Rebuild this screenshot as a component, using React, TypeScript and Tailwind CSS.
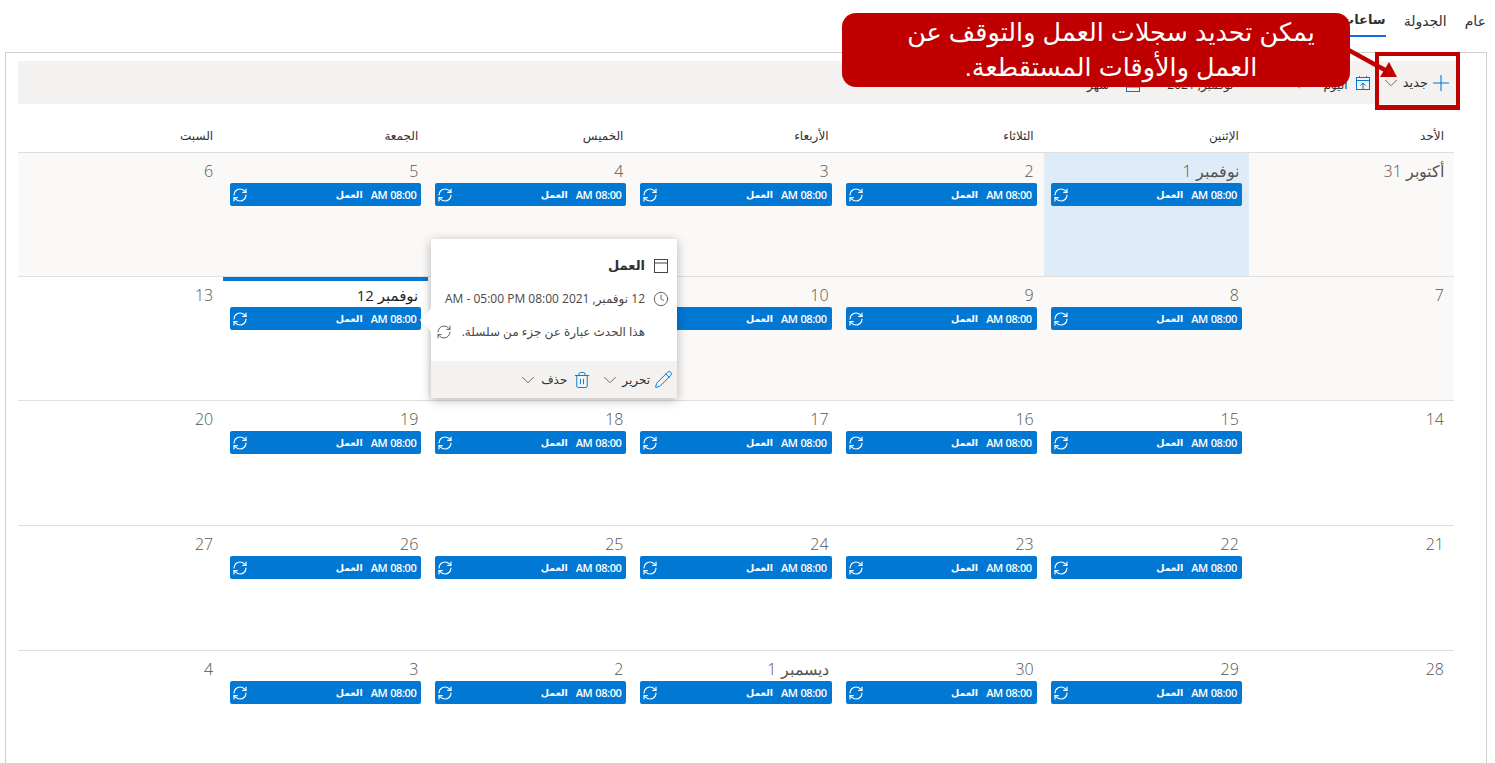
import { ChevronDown, ChevronLeft, Clock, Pencil, Plus, RefreshCw, Trash2 } from 'lucide-react';

type Day = { label: string; tone?: 'past' | 'first' | 'today'; work?: boolean };

const weekdays = ['الأحد', 'الإثنين', 'الثلاثاء', 'الأربعاء', 'الخميس', 'الجمعة', 'السبت'];

const weeks: Day[][] = [
  [
    { label: 'أكتوبر 31', tone: 'past' },
    { label: 'نوفمبر 1', tone: 'first', work: true },
    { label: '2', tone: 'past', work: true },
    { label: '3', tone: 'past', work: true },
    { label: '4', tone: 'past', work: true },
    { label: '5', tone: 'past', work: true },
    { label: '6', tone: 'past' },
  ],
  [
    { label: '7', tone: 'past' },
    { label: '8', tone: 'past', work: true },
    { label: '9', tone: 'past', work: true },
    { label: '10', tone: 'past', work: true },
    { label: '11', tone: 'past', work: true },
    { label: 'نوفمبر 12', tone: 'today', work: true },
    { label: '13' },
  ],
  [
    { label: '14' },
    { label: '15', work: true },
    { label: '16', work: true },
    { label: '17', work: true },
    { label: '18', work: true },
    { label: '19', work: true },
    { label: '20' },
  ],
  [
    { label: '21' },
    { label: '22', work: true },
    { label: '23', work: true },
    { label: '24', work: true },
    { label: '25', work: true },
    { label: '26', work: true },
    { label: '27' },
  ],
  [
    { label: '28' },
    { label: '29', work: true },
    { label: '30', work: true },
    { label: 'ديسمبر 1', work: true },
    { label: '2', work: true },
    { label: '3', work: true },
    { label: '4' },
  ],
];

function WorkBar() {
  return (
    <div className="mx-[7px] flex h-[23px] items-center rounded-[2px] bg-[#0078d4] pl-[2px] pr-[5px] text-[11px] font-semibold text-white">
      <span className="pt-px tracking-[-0.4px]">08:00</span>
      <span className="mr-[3px] pt-px tracking-[-0.5px]">AM</span>
      <span className="mr-[8px] pt-px text-[9.5px]">العمل</span>
      <RefreshCw className="mr-auto h-4 w-4" strokeWidth={1.75} />
    </div>
  );
}

function DayCell({ day }: { day: Day }) {
  let bg = 'bg-white';
  if (day.tone === 'past') bg = 'bg-[#faf9f8]';
  if (day.tone === 'first') bg = 'bg-[#deecf9]';

  return (
    <div className={`relative border-b border-[#e1dfdd] pt-[7px] ${bg}`}>
      {day.tone === 'today' && <div className="absolute inset-x-0 top-0 h-1 bg-[#0078d4]" />}
      <div
        className={`h-[23px] pr-[10px] leading-[22px] ${
          day.tone === 'today' ? 'text-[15px] text-[#201f1e]' : 'text-[16px] font-light text-[#565452]'
        }`}
      >
        {day.label}
      </div>
      {day.work && <WorkBar />}
    </div>
  );
}

// calendar with a small up arrow, the "go to today" button
function TodayIcon() {
  return (
    <svg className="mr-[9px] mt-[1px]" width="16" height="16" viewBox="0 0 16 16" fill="none" stroke="#0078d4">
      <rect x="1.5" y="2.5" width="13" height="12" />
      <path d="M1.5 5.5h13M4.5 1v2M11.5 1v2M8 14V8M5.5 10.5 8 8l2.5 2.5" />
    </svg>
  );
}

function MonthIcon() {
  return (
    <svg className="mr-[26px] mt-1" width="16" height="16" viewBox="0 0 16 16" fill="none" stroke="#0078d4">
      <rect x="1.5" y="2.5" width="13" height="12" />
      <path d="M1.5 5.5h13M1.5 10h13" />
    </svg>
  );
}

function Toolbar() {
  return (
    <div className="-mr-[3px] flex h-[43px] items-center bg-[#f3f2f1] pr-[3px] text-xs text-[#323130]">
      <Plus className="h-[26px] w-[26px] text-[#0078d4]" strokeWidth={1} />
      <span className="text-[13px]">جديد</span>
      <ChevronDown className="mr-px h-[22px] w-[22px] text-[#605e5c]" strokeWidth={1} />
      <TodayIcon />
      <span className="mr-[7px] mt-[5px]">اليوم</span>
      <ChevronLeft className="mr-[19px] mt-[5px] h-3 w-3 text-[#0078d4]" />
      <ChevronDown className="mr-[28px] mt-[5px] h-3 w-3 text-[#0078d4]" />
      <span className="mr-[19px] mt-[5px]">نوفمبر, 2021</span>
      <MonthIcon />
      <span className="mr-[16px] mt-[5px]">شهر</span>
    </div>
  );
}

function CalendarBlank() {
  return (
    <svg width="16" height="16" viewBox="0 0 16 16" fill="none" stroke="#484644" strokeWidth="1">
      <rect x="1.5" y="1.5" width="13" height="13" />
      <path d="M1.5 5h13" />
    </svg>
  );
}

function EventPopup() {
  return (
    <div className="absolute left-[431px] top-[239px] w-[246px] bg-white text-xs text-[#323130] shadow-[0_2px_10px_rgba(0,0,0,0.28)]">
      <div className="absolute -left-[8px] top-[73px] h-4 w-4 rotate-45 bg-white" />
      <div className="relative h-[122px] pr-[8px] pt-[18px]">
        <div className="flex items-center gap-[8px] text-[13px] font-bold">
          <CalendarBlank />
          <span>العمل</span>
        </div>
        <div className="mt-[17px] flex items-center gap-[8px] pl-1 text-[#484644]">
          <Clock className="h-4 w-4" strokeWidth={1.25} />
          <span className="whitespace-nowrap">
            12 نوفمبر, <bdi dir="ltr">AM - 05:00 PM 08:00 2021</bdi>
          </span>
        </div>
        <div className="mt-[17px] flex items-center gap-[10px] pr-[24px] text-[#484644]">
          <span>هذا الحدث عبارة عن جزء من سلسلة.</span>
          <RefreshCw className="h-4 w-4" strokeWidth={1.25} />
        </div>
      </div>
      <div className="relative flex h-[37px] items-center bg-[#f3f2f1] pr-[4px]">
        <Pencil className="h-[19px] w-[19px] text-[#0078d4]" strokeWidth={1.25} />
        <span className="mr-[4px]">تحرير</span>
        <ChevronDown className="mr-px h-[22px] w-[22px] text-[#605e5c]" strokeWidth={1} />
        <Trash2 className="mr-[8px] h-[18px] w-[18px] text-[#0078d4]" strokeWidth={1.25} />
        <span className="mr-[6px]">حذف</span>
        <ChevronDown className="mr-[2px] h-[22px] w-[22px] text-[#605e5c]" strokeWidth={1} />
      </div>
    </div>
  );
}

function Callout() {
  return (
    <>
      <div className="absolute left-[842px] top-[13px] flex h-[74px] w-[508px] items-center justify-center rounded-[14px] bg-[#c00000] pl-[30px] text-center font-['Liberation_Sans','DejaVu_Sans',sans-serif] text-[25.5px] leading-[35px] text-white">
        <p>
          يمكن تحديد سجلات العمل والتوقف عن
          <br />
          العمل والأوقات المستقطعة.
        </p>
      </div>
      <svg className="absolute left-[1340px] top-[40px]" width="62" height="42" viewBox="0 0 62 42" fill="#c00000">
        <path d="M4 5 L46 28 L44 32 L2 9 Z" />
        <path d="M57 37 L40 37 L49 22 Z" />
      </svg>
      <div className="absolute left-[1375px] top-[52px] h-[58px] w-[85px] border-4 border-b-[5px] border-[#c00000]" />
    </>
  );
}

export default function App() {
  return (
    <div
      dir="rtl"
      className="relative h-[763px] w-[1495px] overflow-hidden bg-white font-['Open_Sans','DejaVu_Sans',sans-serif]"
    >
      <nav className="flex h-[52px] items-start gap-[18px] pr-[9px] pt-[10px] text-[14px] text-[#323130]">
        <span>عام</span>
        <span>الجدولة</span>
        <span className="border-b-2 border-[#0f6cdb] pb-[5px] text-[13px] font-bold">ساعات العمل</span>
      </nav>

      <section className="ml-[5px] mr-[8px] h-[711px] border-l border-r border-t border-[#d2d0ce] pl-[12px] pr-[32px] pt-[8px]">
        <Toolbar />
        <div className="grid h-[49px] grid-cols-7 border-b border-[#e1dfdd] text-xs text-[#323130]">
          {weekdays.map((name) => (
            <div key={name} className="pr-[10px] pt-[24px]">
              {name}
            </div>
          ))}
        </div>
        <div className="grid grid-cols-7 grid-rows-[124px_124px_125px_125px_125px]">
          {weeks.flat().map((day, i) => (
            <DayCell key={i} day={day} />
          ))}
        </div>
      </section>

      <EventPopup />
      <Callout />
    </div>
  );
}
